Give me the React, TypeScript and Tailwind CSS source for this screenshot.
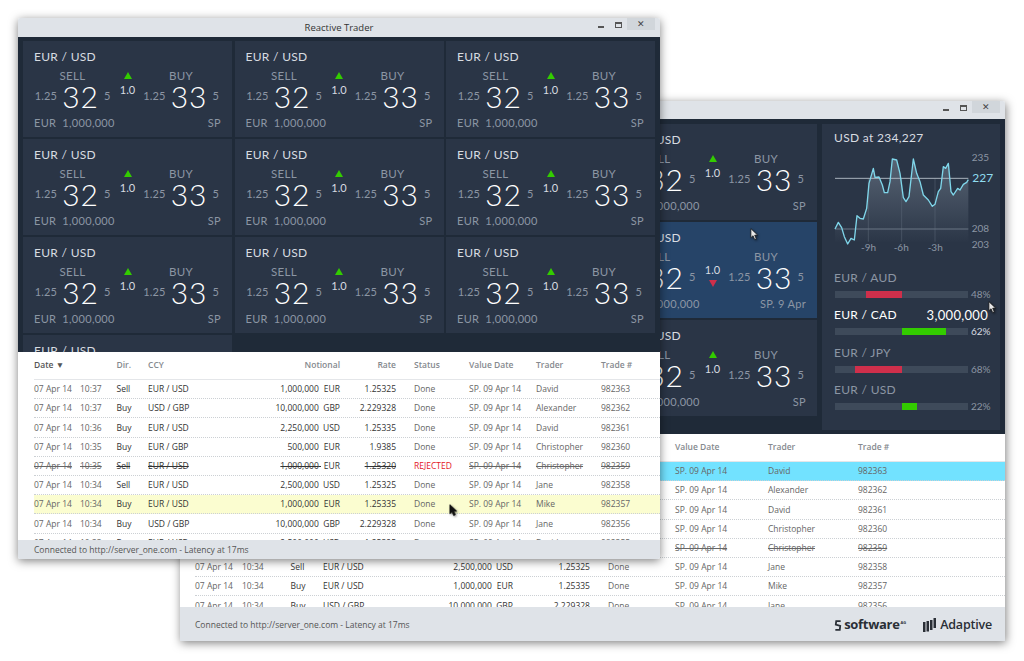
const rows = [
  ['07 Apr 14', '10:37', 'Sell', 'EUR / USD', '1,000,000', 'EUR', '1.25325', 'Done', 'David', '982363'],
  ['07 Apr 14', '10:37', 'Buy', 'USD / GBP', '10,000,000', 'GBP', '2.229328', 'Done', 'Alexander', '982362'],
  ['07 Apr 14', '10:36', 'Buy', 'EUR / USD', '2,250,000', 'USD', '1.25335', 'Done', 'David', '982361'],
  ['07 Apr 14', '10:35', 'Buy', 'EUR / GBP', '500,000', 'EUR', '1.9385', 'Done', 'Christopher', '982360'],
  ['07 Apr 14', '10:35', 'Sell', 'EUR / USD', '1,000,000', 'EUR', '1.25320', 'REJECTED', 'Christopher', '982359'],
  ['07 Apr 14', '10:34', 'Sell', 'EUR / USD', '2,500,000', 'USD', '1.25325', 'Done', 'Jane', '982358'],
  ['07 Apr 14', '10:34', 'Buy', 'EUR / USD', '1,000,000', 'EUR', '1.25335', 'Done', 'Mike', '982357'],
  ['07 Apr 14', '10:34', 'Buy', 'USD / GBP', '10,000,000', 'GBP', '2.229328', 'Done', 'Jane', '982356'],
  ['07 Apr 14', '10:33', 'Buy', 'EUR / USD', '2,500,000', 'USD', '1.25325', 'Done', 'David', '982355'],
];

const bars = [
  { pair: 'EUR / AUD', pct: '48%', color: 'bg-[#cf2f4b]', start: 31, width: 36 },
  { pair: 'EUR / CAD', pct: '62%', color: 'bg-[#33cc00]', start: 67, width: 44, amount: '3,000,000' },
  { pair: 'EUR / JPY', pct: '68%', color: 'bg-[#cf2f4b]', start: 20, width: 47 },
  { pair: 'EUR / USD', pct: '22%', color: 'bg-[#33cc00]', start: 67, width: 15 },
];

const linePoints =
  '30,252 40,232 50,248 58,275 68,297 78,280 88,285 96,212 105,220 115,222 125,190 132,115 145,70 150,97 162,96 172,120 178,143 188,143 195,110 202,42 215,45 225,85 235,158 243,170 252,155 265,42 275,85 285,110 295,150 310,165 322,184 330,178 340,140 347,130 355,65 362,70 370,55 378,140 385,150 398,130 405,135 415,118 425,112 430,104';

function Price({ label }: { label: string }) {
  return (
    <div className="h-[28px] flex items-center">
      <span className="text-[11px] tracking-[0.2px] text-[#8c96a4]">1.25</span>
      <span className="text-[30px] leading-none text-white font-light mx-[5px] tracking-[1px]">{label}</span>
      <span className="text-[11px] text-[#8c96a4]">5</span>
    </div>
  );
}

function PriceTile({ down, active, tenor = 'SP' }: { down?: boolean; active?: boolean; tenor?: string }) {
  return (
    <div
      className={`w-[209px] h-[96px] shrink-0 pt-[9px] px-[11px] flex flex-col font-['Lato',sans-serif] ${
        active ? 'bg-[#264468]' : 'bg-[#2a3546]'
      }`}
    >
      <div className="h-[14px] leading-[14px] text-[12px] tracking-[0.3px] text-[#d8dce1]">EUR / USD</div>
      <div className="grid grid-cols-[77px_33px_74px] mt-[6px]">
        <div className="flex flex-col items-center">
          <div className="h-[12px] leading-[12px] text-[11.5px] tracking-[0.3px] text-[#8c96a4]">SELL</div>
          <Price label="32" />
        </div>
        {down ? (
          <div className="flex flex-col items-center pt-[13px]">
            <div className="h-[12px] leading-[12px] text-[11px] text-[#d8dce1]">1.0</div>
            <div className="mt-[4px] w-0 h-0 border-x-[4.5px] border-x-transparent border-t-[7px] border-t-[#cf2f4b]" />
          </div>
        ) : (
          <div className="flex flex-col items-center pt-[2px]">
            <div className="w-0 h-0 border-x-[4.5px] border-x-transparent border-b-[7px] border-b-[#33cc00]" />
            <div className="mt-[5px] h-[12px] leading-[12px] text-[11px] text-[#d8dce1]">1.0</div>
          </div>
        )}
        <div className="flex flex-col items-center">
          <div className="h-[12px] leading-[12px] text-[11.5px] tracking-[0.3px] text-[#8c96a4]">BUY</div>
          <Price label="33" />
        </div>
      </div>
      <div className="mt-[6px] h-[14px] leading-[14px] flex justify-between text-[11px] tracking-[0.3px] text-[#8c96a4]">
        <span>
          EUR <span className="ml-[3px]">1,000,000</span>
        </span>
        <span>{tenor}</span>
      </div>
    </div>
  );
}

function TitleBar({ title, height }: { title?: string; height: string }) {
  return (
    <div className={`${height} shrink-0 bg-[#dfe3e8] rounded-t-[2px] flex items-start justify-between text-[#333]`}>
      <div className="w-[70px]" />
      <div className="text-[9.5px] leading-[19px] font-['Open_Sans',sans-serif]">{title}</div>
      <div className="w-[70px] flex items-start justify-end pr-[5px]">
        <div className="w-[6px] h-[2px] mt-[8px] bg-[#555]" />
        <div className="w-[7px] h-[6px] mt-[4px] ml-[11px] border border-[#555] border-t-2" />
        <div className="w-[28px] h-[12px] ml-[5px] bg-[#d1d6db] text-[9px] leading-[11px] text-center text-[#444]">✕</div>
      </div>
    </div>
  );
}

function TradeTable({
  grid,
  className,
  cyan,
  yellow,
}: {
  grid: string;
  className: string;
  cyan?: boolean;
  yellow?: boolean;
}) {
  return (
    <div
      className={`${className} bg-white overflow-hidden flex flex-col whitespace-nowrap font-['Open_Sans',sans-serif] text-[8.5px]`}
    >
      <div
        className={`grid ${grid} h-[28px] shrink-0 items-center border-b border-[#e4e6e9] font-semibold text-[#85898e]`}
      >
        <span className="text-[#555] col-span-2">Date ▼</span>
        <span>Dir.</span>
        <span>CCY</span>
        <span className="text-right">Notional</span>
        <span className="text-right">Rate</span>
        <span className="pl-[18px]">Status</span>
        <span>Value Date</span>
        <span>Trader</span>
        <span>Trade #</span>
      </div>
      {rows.map((row, i) => {
        const rejected = row[7] === 'REJECTED';
        const strike = rejected ? 'line-through' : '';
        let bg = '';
        if (cyan && i === 0) bg = 'bg-[#72e2ff]';
        if (yellow && i === 6) bg = 'bg-[#fbfdd0]';
        return (
          <div
            key={row[9]}
            className={`grid ${grid} h-[19.2px] shrink-0 items-center pt-[1px] border-b border-dotted border-[#ccd0d4] text-[#666] ${bg}`}
          >
            <span className={strike}>{row[0]}</span>
            <span className={strike}>{row[1]}</span>
            <span className={`text-[#333] font-medium ${strike}`}>{row[2]}</span>
            <span className={`text-[#333] font-medium ${strike}`}>{row[3]}</span>
            <span className={`text-right text-[#333] ${strike}`}>
              {row[4]} <span className="inline-block w-[17px] ml-[2px] text-right font-medium">{row[5]}</span>
            </span>
            <span className={`text-right text-[#333] font-medium ${strike}`}>{row[6]}</span>
            <span className={rejected ? 'pl-[18px] text-[#e3161f]' : 'pl-[18px]'}>{row[7]}</span>
            <span className={strike}>SP. 09 Apr 14</span>
            <span className={strike}>{row[8]}</span>
            <span className={strike}>{row[9]}</span>
          </div>
        );
      })}
    </div>
  );
}

function Chart() {
  return (
    <svg viewBox="0 0 540 330" className="w-[180px] h-[110px] ml-[3px] block font-['Lato',sans-serif]">
      <defs>
        <linearGradient id="area" x1="0" y1="0" x2="0" y2="1">
          <stop offset="0%" stopColor="#5d6979" />
          <stop offset="100%" stopColor="#2a3546" />
        </linearGradient>
      </defs>
      <polygon points={`30,290 ${linePoints} 430,290`} fill="url(#area)" opacity="0.9" />
      {[130, 230, 330].map((x) => (
        <line key={x} x1={x} x2={x} y1="100" y2="290" stroke="#5f6b7a" strokeWidth="1.5" />
      ))}
      <line x1="30" x2="430" y1="100" y2="100" stroke="#a9b2bc" strokeWidth="3" />
      <line x1="30" x2="430" y1="252" y2="252" stroke="#6b7685" strokeWidth="3" />
      <polyline points={linePoints} fill="none" stroke="#7fd6ea" strokeWidth="4" strokeLinejoin="round" />
      <g fill="#8c96a4" fontSize="30">
        <text x="440" y="47">235</text>
        <text x="440" y="262">208</text>
        <text x="440" y="310">203</text>
        <text x="108" y="318">-9h</text>
        <text x="206" y="318">-6h</text>
        <text x="308" y="318">-3h</text>
      </g>
      <text x="442" y="112" fill="#8fdcf0" fontSize="36">
        227
      </text>
    </svg>
  );
}

function PositionPanel() {
  return (
    <div className="w-[178px] h-[306px] shrink-0 bg-[#2a3546] font-['Lato',sans-serif]">
      <div className="pt-[7px] pl-[12px] h-[21px] leading-[14px] text-[12px] tracking-[0.3px] text-[#d8dce1]">
        USD at 234,227
      </div>
      <Chart />
      <div className="mt-[16px] pl-[12px]">
        {bars.map((b) => (
          <div key={b.pair} className="mb-[10.3px]">
            <div
              className={`flex justify-between items-center w-[154px] h-[14px] leading-[14px] text-[12px] tracking-[0.3px] ${
                b.amount ? 'text-white' : 'text-[#8c96a4]'
              }`}
            >
              <span>{b.pair}</span>
              <span className="text-[13px]">{b.amount}</span>
            </div>
            <div className="flex items-center mt-[6px] h-[7px] pl-[1px]">
              <div className="w-[133px] h-[7px] bg-[#3e4a5a] flex">
                <div className={b.color} style={{ marginLeft: b.start, width: b.width }} />
              </div>
              <span className={`ml-[3px] text-[10px] ${b.amount ? 'text-[#d8dce1]' : 'text-[#8c96a4]'}`}>{b.pct}</span>
            </div>
          </div>
        ))}
      </div>
    </div>
  );
}

function Cursor({ className, dark }: { className: string; dark?: boolean }) {
  return (
    <svg viewBox="0 0 10 14" className={`absolute w-[9px] h-[13px] z-20 drop-shadow-[1px_1px_1px_rgba(0,0,0,0.5)] ${className}`}>
      <path
        d="M1 0.5 L1 10.5 L3.4 8.4 L5.2 12.6 L7 11.8 L5.2 7.8 L8.4 7.6 Z"
        fill={dark ? '#111' : '#e8e8e8'}
        stroke="#111"
        strokeWidth="0.8"
      />
    </svg>
  );
}

export default function App() {
  return (
    <div className="relative w-[1024px] h-[661px] bg-white overflow-hidden">
      {/* back window */}
      <div className="absolute left-[180px] top-[101px] w-[825px] h-[540px] flex flex-col rounded-t-[2px] shadow-[1px_2px_10px_rgba(0,0,0,0.5)]">
        <TitleBar height="h-[18px]" />
        <div className="h-[315px] shrink-0 bg-[#1f2a38] flex justify-end gap-[5px] pt-[5px] pr-[5px]">
          <div className="flex flex-col gap-[2px]">
            <PriceTile />
            <PriceTile down active tenor="SP. 9 Apr" />
            <PriceTile />
          </div>
          <PositionPanel />
        </div>
        <TradeTable
          className="h-[173px] shrink-0 pl-[15px]"
          grid="grid-cols-[47px_48.6px_32.4px_90px_100px_77px_85px_93px_90px_90px]"
          cyan
        />
        <div className="flex-1 bg-[#dfe3e8] flex items-center justify-between pt-[2px] pl-[15px] pr-[13px]">
          <span className="text-[8.5px] text-[#555] font-['Open_Sans',sans-serif]">
            Connected to http://server_one.com - Latency at 17ms
          </span>
          <div className="flex items-center text-[#2a2f36] font-['Open_Sans',sans-serif]">
            <svg viewBox="0 0 9 14" className="w-[8px] h-[13px]">
              <path d="M7.5 2 L2.5 2 L2 6 L7 7.5 L6.5 12 L1.5 12" fill="none" stroke="#2a2f36" strokeWidth="2" />
            </svg>
            <span className="ml-[2px] text-[13px] font-bold tracking-[-0.3px]">software</span>
            <span className="ml-[1px] mb-[5px] text-[4px] font-bold">AG</span>
            <svg viewBox="0 0 14 15" className="w-[14px] h-[15px] ml-[17px]">
              <path d="M0 4h2.5v10H0zM3.5 3h2.5v10.5H3.5zM7 2h2.5v10H7zM10.5 0H13v10h-2.5z" fill="#2a2f36" />
            </svg>
            <span className="ml-[3px] text-[12.5px] font-semibold tracking-[-0.2px]">Adaptive</span>
          </div>
        </div>
      </div>

      {/* front window */}
      <div className="absolute z-10 left-[18px] top-[18px] w-[642px] h-[541px] flex flex-col rounded-[2px] shadow-[0_2px_10px_rgba(0,0,0,0.5)]">
        <TitleBar title="Reactive Trader" height="h-[19px]" />
        <div className="h-[315px] shrink-0 bg-[#1f2a38] overflow-hidden pt-[4px] pl-[5px]">
          <div className="grid grid-cols-[209px_209px_209px] gap-x-[2.5px] gap-y-[2px]">
            {Array.from({ length: 10 }).map((_, i) => (
              <PriceTile key={i} />
            ))}
          </div>
        </div>
        <TradeTable
          className="h-[188px] shrink-0 pl-[16px]"
          grid="grid-cols-[46px_36.5px_31.5px_90px_102px_56px_73px_67px_65px_59px]"
          yellow
        />
        <div className="flex-1 bg-[#dfe3e8] rounded-b-[2px] pl-[16px] text-[8.5px] leading-[19px] text-[#555] font-['Open_Sans',sans-serif]">
          Connected to http://server_one.com - Latency at 17ms
        </div>
      </div>

      <Cursor className="left-[750px] top-[228px]" />
      <Cursor className="left-[988px] top-[301px]" />
      <Cursor className="left-[449px] top-[504px]" dark />
    </div>
  );
}
